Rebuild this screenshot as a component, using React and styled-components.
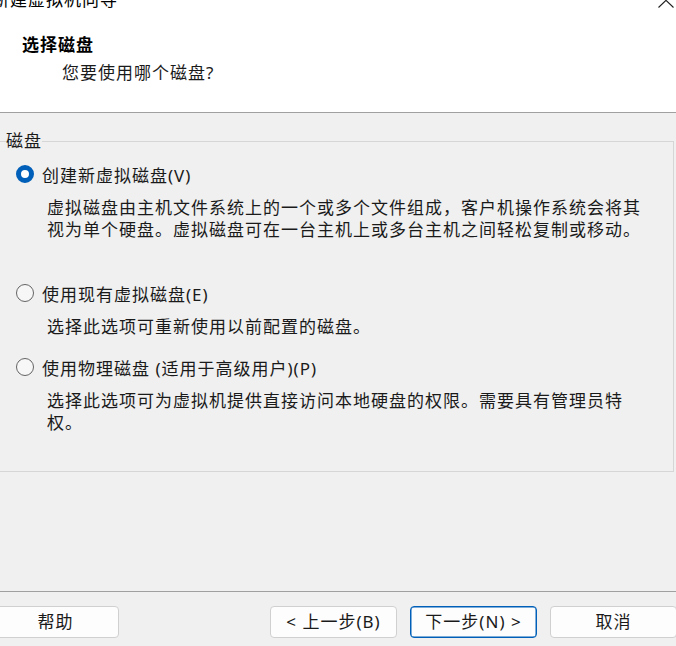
import React from "react";
import styled, { createGlobalStyle } from "styled-components";

const Global = createGlobalStyle`
  html, body { margin: 0; padding: 0; background: #f0f0f0; }
  body { font-family: "Noto Sans", "Noto Sans CJK SC", sans-serif; }
`;

const Frame = styled.div`
  width: 676px;
  height: 646px;
  overflow: hidden;
  display: flex;
  flex-direction: column;
  background: #f0f0f0;
  color: #1a1a1a;
  font-family: "Noto Sans", "Noto Sans CJK SC", sans-serif;
  font-size: 17px;
  letter-spacing: 1px;
`;

const Header = styled.header`
  height: 112px;
  flex-shrink: 0;
  background: #ffffff;
  border-bottom: 1px solid #a0a0a0;
  display: flex;
  flex-direction: column;
`;

const TitleBar = styled.div`
  display: flex;
  justify-content: space-between;
  align-items: flex-start;
  height: 20px;
  margin-top: -10px;
`;

const TitleText = styled.span`
  line-height: 20px;
  margin-left: -8px;
  color: #000;
  white-space: nowrap;
`;

const Collapse = styled.svg`
  margin-top: 10px;
  margin-right: 2px;
  display: block;
`;

const HeaderTitle = styled.div`
  font-weight: 700;
  line-height: 22px;
  margin: 24px 0 0 22px;
  color: #000;
`;

const HeaderSub = styled.div`
  line-height: 22px;
  margin: 6px 0 0 62px;
  color: #1a1a1a;
`;

const Body = styled.main`
  flex: 1;
  padding: 18px 2px 0 0;
  display: flex;
  flex-direction: column;
  min-height: 0;
`;

const Group = styled.fieldset`
  box-sizing: border-box;
  height: 341px;
  margin: 0 0 0 -3px;
  padding: 12px 0 0 8px;
  border: 1px solid #d6d6d6;
  min-width: 0;
`;

const Legend = styled.legend`
  padding: 0;
  line-height: 20px;
  color: #1a1a1a;
`;

const Option = styled.div`
  margin-top: ${(p) => p.$gap}px;
  display: flex;
  flex-direction: column;
`;

const OptionRow = styled.label`
  display: flex;
  align-items: center;
  gap: 8px;
  height: 22px;
  margin-left: 10px;
  color: #1a1a1a;
`;

const Radio = styled.span`
  box-sizing: border-box;
  width: 18px;
  height: 18px;
  border-radius: 50%;
  flex-shrink: 0;
  border: ${(p) => (p.$checked ? "5.5px solid #005fb8" : "1px solid #646464")};
  background: ${(p) => (p.$checked ? "#ffffff" : "#f7f7f7")};
`;

const Desc = styled.div`
  margin: 12px 0 0 41px;
  line-height: 22px;
  white-space: nowrap;
  color: #1a1a1a;
`;

const Line = styled.span`
  display: block;
`;

const Footer = styled.footer`
  flex-shrink: 0;
  border-top: 1px solid #a0a0a0;
  padding: 14px 0 8px;
`;

const ButtonRow = styled.div`
  display: flex;
  align-items: center;
  margin: 0 -1px 0 -8px;
`;

const RightButtons = styled.div`
  display: flex;
  gap: 13px;
  margin-left: auto;
`;

const Button = styled.button`
  box-sizing: border-box;
  width: 127px;
  height: 32px;
  padding: 0;
  border-radius: 4px;
  border: 1px solid ${(p) => (p.$primary ? "#005fb8" : "#d0d0d0")};
  box-shadow: ${(p) => (p.$primary ? "inset 0 0 0 0.5px #005fb8" : "none")};
  background: #fdfdfd;
  color: #1a1a1a;
  font-family: "Noto Sans", "Noto Sans CJK SC", sans-serif;
  font-size: 17px;
  letter-spacing: 1px;
  line-height: 30px;
  white-space: nowrap;
`;

const options = [
  {
    label: "创建新虚拟磁盘(V)",
    checked: true,
    gap: 0,
    lines: [
      "虚拟磁盘由主机文件系统上的一个或多个文件组成，客户机操作系统会将其",
      "视为单个硬盘。虚拟磁盘可在一台主机上或多台主机之间轻松复制或移动。",
    ],
  },
  {
    label: "使用现有虚拟磁盘(E)",
    checked: false,
    gap: 41,
    lines: ["选择此选项可重新使用以前配置的磁盘。"],
  },
  {
    label: "使用物理磁盘 (适用于高级用户)(P)",
    checked: false,
    gap: 18,
    lines: [
      "选择此选项可为虚拟机提供直接访问本地硬盘的权限。需要具有管理员特",
      "权。",
    ],
  },
];

export default function App() {
  return (
    <>
      <Global />
      <Frame>
        <Header>
          <TitleBar>
            <TitleText>新建虚拟机向导</TitleText>
            <Collapse width="16" height="8" viewBox="0 0 16 8">
              <polyline
                points="0.5,7.5 8,0.3 15.5,7.5"
                fill="none"
                stroke="#1f1f1f"
                strokeWidth="1.1"
              />
            </Collapse>
          </TitleBar>
          <HeaderTitle>选择磁盘</HeaderTitle>
          <HeaderSub>您要使用哪个磁盘?</HeaderSub>
        </Header>
        <Body>
          <Group>
            <Legend>磁盘</Legend>
            {options.map((o) => (
              <Option key={o.label} $gap={o.gap}>
                <OptionRow>
                  <Radio $checked={o.checked} />
                  {o.label}
                </OptionRow>
                <Desc>
                  {o.lines.map((l) => (
                    <Line key={l}>{l}</Line>
                  ))}
                </Desc>
              </Option>
            ))}
          </Group>
        </Body>
        <Footer>
          <ButtonRow>
            <Button>帮助</Button>
            <RightButtons>
              <Button>&lt; 上一步(B)</Button>
              <Button $primary>下一步(N) &gt;</Button>
              <Button>取消</Button>
            </RightButtons>
          </ButtonRow>
        </Footer>
      </Frame>
    </>
  );
}
